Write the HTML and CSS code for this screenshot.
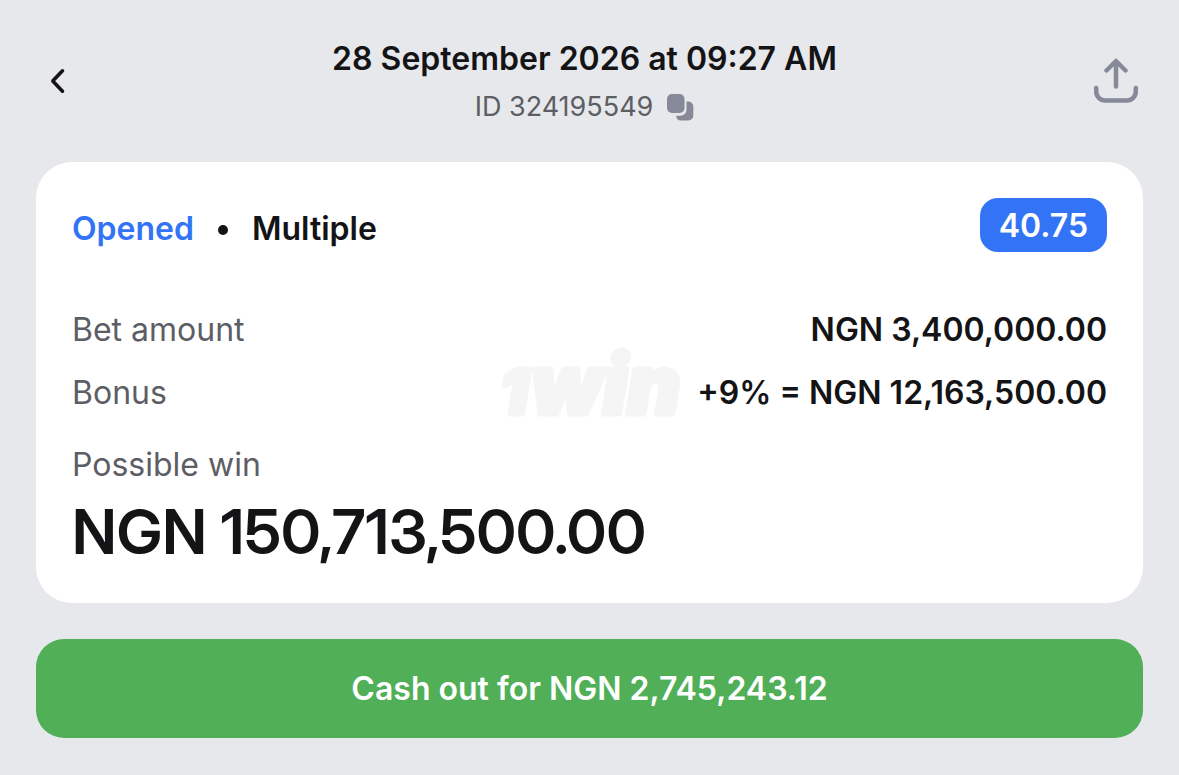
FILE: index.html
```html
<!DOCTYPE html>
<html lang="en">
<head>
<meta charset="utf-8">
<meta name="viewport" content="width=device-width, initial-scale=1">
<title>Bet 324195549</title>
<link rel="stylesheet" href="styles.css">
</head>
<body>
<header class="header">
  <button class="icon-button back" type="button" aria-label="Back">
    <svg width="16" height="26" viewBox="0 0 16 26" fill="none" stroke="currentColor" stroke-width="3.6" stroke-linecap="round" stroke-linejoin="round"><path d="M12.500 2.800 3.200 12.400q-.6.6 0 1.200L12.500 23.200"/></svg>
  </button>
  <div class="heading">
    <h1 class="title">28 September 2026 at 09:27 AM</h1>
    <div class="bet-id">
      <span>ID 324195549</span>
      <button class="copy" type="button" aria-label="Copy ID">
        <svg width="27" height="27" viewBox="0 0 27 27" fill="currentColor"><rect x="0" y="0" width="17.500" height="19" rx="5"/><path d="M19.500 7.500h1.800a5 5 0 0 1 5 5v9a5 5 0 0 1-5 5H14a5 5 0 0 1-4.800-4.800h4.300a6 6 0 0 0 6-6z"/></svg>
      </button>
    </div>
  </div>
  <button class="icon-button share" type="button" aria-label="Share">
    <svg width="46" height="46" viewBox="0 0 46 46" fill="none" stroke="currentColor" stroke-width="4.500" stroke-linecap="round" stroke-linejoin="round"><path d="M23 28.500V3.500M13.500 12.500 23 3l9.500 9.500M3.200 30v3.500a9 9 0 0 0 9 9h21.600a9 9 0 0 0 9-9V30"/></svg>
  </button>
</header>
<main class="main">
  <section class="card">
    <div class="status-row">
      <div class="status">
        <span class="opened">Opened</span>
        <span class="dot"></span>
        <span>Multiple</span>
      </div>
      <span class="odds">40.75</span>
    </div>
    <dl class="details">
      <div class="row"><dt>Bet amount</dt><dd>NGN 3,400,000.00</dd></div>
      <div class="row"><dt>Bonus</dt><dd>+9% = NGN 12,163,500.00</dd></div>
      <div class="win"><dt>Possible win</dt><dd class="win-amount">NGN 150,713,500.00</dd></div>
    </dl>
    <svg class="watermark" width="180" height="72" viewBox="0 0 180 72" role="img" aria-label="1win">
      <text x="0" y="67" class="mark-one">1</text>
      <text x="31" y="67" class="mark-win">win</text>
    </svg>
  </section>
  <button class="cash-out" type="button">Cash out for NGN 2,745,243.12</button>
</main>
</body>
</html>
```
FILE: styles.css
```css
* {
  box-sizing: border-box;
}

body {
  margin: 0;
  padding: 36px;
  background: #e7e8ec;
  color: #141416;
  font-family: Inter, "Liberation Sans", sans-serif;
  font-size: 32px;
  line-height: 40px;
  font-weight: 600;
}

button {
  font: inherit;
  border: 0;
  padding: 0;
  cursor: pointer;
}

svg {
  display: block;
}

.header {
  display: grid;
  grid-template-columns: 44px 1fr 54px;
  align-items: center;
}

.icon-button {
  display: flex;
  align-items: center;
  justify-content: center;
  height: 54px;
  background: none;
  color: inherit;
}

.share,
.copy {
  color: #868a98;
}

.heading {
  padding-top: 3px;
  text-align: center;
}

.title {
  margin: 0;
  font-size: 32px;
  font-weight: 600;
}

.bet-id {
  display: flex;
  align-items: center;
  justify-content: center;
  gap: 14px;
  margin-top: 10px;
  font-size: 27px;
  line-height: 36px;
  font-weight: 400;
  color: #5d5e64;
}

.copy {
  background: none;
}

.main {
  display: flex;
  flex-direction: column;
  gap: 36px;
  margin-top: 37px;
}

.card {
  position: relative;
  padding: 36px;
  background: #fff;
  border-radius: 36px;
}

.status-row,
.row {
  display: flex;
  align-items: center;
  justify-content: space-between;
}

.status {
  display: flex;
  align-items: center;
  gap: 24px;
  padding-top: 8px;
}

.opened {
  color: #3374f6;
}

.dot {
  width: 10px;
  height: 10px;
  margin-top: 2px;
  border-radius: 50%;
  background: currentColor;
}

.odds {
  padding: 8px 19px 6px;
  border-radius: 18px;
  background: #3374f6;
  color: #fff;
}

.details {
  position: relative;
  z-index: 1;
  margin: 58px 0 0;
}

.row + .row {
  margin-top: 23px;
}

.win {
  margin-top: 32px;
}

dt {
  font-weight: 400;
  color: #5d5e64;
}

dd {
  margin: 0;
}

.win-amount {
  margin-top: 12px;
  font-family: "Inter Display", Inter, "Liberation Sans", sans-serif;
  font-size: 62px;
  line-height: 70px;
  font-variation-settings: "opsz" 32;
}

.watermark {
  position: absolute;
  top: 50%;
  left: 50%;
  transform: translate(-50%, -50%);
  overflow: visible;
  font-weight: 900;
  font-style: italic;
  fill: #f5f5f5;
  stroke: #f5f5f5;
  stroke-width: 5px;
  stroke-linejoin: round;
}

.mark-one {
  font-size: 62px;
}

.mark-win {
  font-size: 82px;
}

.cash-out {
  padding: 30px 36px 29px;
  border-radius: 28px;
  background: #50af57;
  color: #fff;
}
```
